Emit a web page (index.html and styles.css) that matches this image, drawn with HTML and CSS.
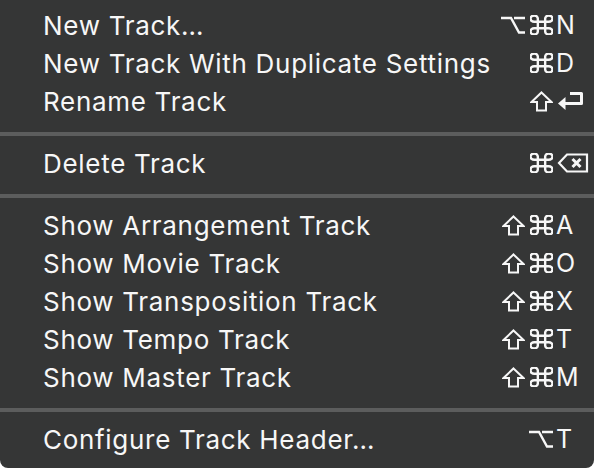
FILE: index.html
```html
<!DOCTYPE html>
<html>
<head>
<meta charset="utf-8">
<link rel="stylesheet" href="styles.css">
</head>
<body>
<div class="menu">
  <div class="item"><span class="label">New Track…</span><span class="mods">
    <svg class="ic opt" viewBox="0 0 24 18"><path d="M0 2H10L18 16.5H24M13 2H24"/></svg>
    <svg class="ic cmd" viewBox="2.6 2.6 18.8 18.8" preserveAspectRatio="none"><path vector-effect="non-scaling-stroke" d="M15 6v12a3 3 0 1 0 3-3H6a3 3 0 1 0 3 3V6a3 3 0 1 0-3 3h12a3 3 0 1 0-3-3"/></svg>
  </span><span class="key">N</span></div>
  <div class="item"><span class="label">New Track With Duplicate Settings</span><span class="mods">
    <svg class="ic cmd" viewBox="2.6 2.6 18.8 18.8" preserveAspectRatio="none"><path vector-effect="non-scaling-stroke" d="M15 6v12a3 3 0 1 0 3-3H6a3 3 0 1 0 3 3V6a3 3 0 1 0-3 3h12a3 3 0 1 0-3-3"/></svg>
  </span><span class="key">D</span></div>
  <div class="item"><span class="label">Rename Track</span><span class="mods">
    <svg class="ic shift" viewBox="0 0 23 21"><path d="M11.5 1.5L21.5 11H16V19.5H7V11H1.5Z"/></svg>
  </span><span class="key"><svg class="ret" viewBox="0 0 28 20"><path class="fill" d="M2 12.5L9.5 6V19Z"/><path d="M8 12.5H25.5V2.5H14"/></svg></span></div>
  <div class="sep"></div>
  <div class="item"><span class="label">Delete Track</span><span class="mods">
    <svg class="ic cmd" viewBox="2.6 2.6 18.8 18.8" preserveAspectRatio="none"><path vector-effect="non-scaling-stroke" d="M15 6v12a3 3 0 1 0 3-3H6a3 3 0 1 0 3 3V6a3 3 0 1 0-3 3h12a3 3 0 1 0-3-3"/></svg>
  </span><span class="key"><svg class="del" viewBox="0 0 33 22"><path d="M3 11L11 2.5H31V19.5H11Z"/><path class="x" d="M16.5 7L24.5 15M24.5 7L16.5 15"/></svg></span></div>
  <div class="sep"></div>
  <div class="item"><span class="label">Show Arrangement Track</span><span class="mods">
    <svg class="ic shift" viewBox="0 0 23 21"><path d="M11.5 1.5L21.5 11H16V19.5H7V11H1.5Z"/></svg>
    <svg class="ic cmd" viewBox="2.6 2.6 18.8 18.8" preserveAspectRatio="none"><path vector-effect="non-scaling-stroke" d="M15 6v12a3 3 0 1 0 3-3H6a3 3 0 1 0 3 3V6a3 3 0 1 0-3 3h12a3 3 0 1 0-3-3"/></svg>
  </span><span class="key">A</span></div>
  <div class="item"><span class="label">Show Movie Track</span><span class="mods">
    <svg class="ic shift" viewBox="0 0 23 21"><path d="M11.5 1.5L21.5 11H16V19.5H7V11H1.5Z"/></svg>
    <svg class="ic cmd" viewBox="2.6 2.6 18.8 18.8" preserveAspectRatio="none"><path vector-effect="non-scaling-stroke" d="M15 6v12a3 3 0 1 0 3-3H6a3 3 0 1 0 3 3V6a3 3 0 1 0-3 3h12a3 3 0 1 0-3-3"/></svg>
  </span><span class="key">O</span></div>
  <div class="item"><span class="label">Show Transposition Track</span><span class="mods">
    <svg class="ic shift" viewBox="0 0 23 21"><path d="M11.5 1.5L21.5 11H16V19.5H7V11H1.5Z"/></svg>
    <svg class="ic cmd" viewBox="2.6 2.6 18.8 18.8" preserveAspectRatio="none"><path vector-effect="non-scaling-stroke" d="M15 6v12a3 3 0 1 0 3-3H6a3 3 0 1 0 3 3V6a3 3 0 1 0-3 3h12a3 3 0 1 0-3-3"/></svg>
  </span><span class="key">X</span></div>
  <div class="item"><span class="label">Show Tempo Track</span><span class="mods">
    <svg class="ic shift" viewBox="0 0 23 21"><path d="M11.5 1.5L21.5 11H16V19.5H7V11H1.5Z"/></svg>
    <svg class="ic cmd" viewBox="2.6 2.6 18.8 18.8" preserveAspectRatio="none"><path vector-effect="non-scaling-stroke" d="M15 6v12a3 3 0 1 0 3-3H6a3 3 0 1 0 3 3V6a3 3 0 1 0-3 3h12a3 3 0 1 0-3-3"/></svg>
  </span><span class="key">T</span></div>
  <div class="item"><span class="label">Show Master Track</span><span class="mods">
    <svg class="ic shift" viewBox="0 0 23 21"><path d="M11.5 1.5L21.5 11H16V19.5H7V11H1.5Z"/></svg>
    <svg class="ic cmd" viewBox="2.6 2.6 18.8 18.8" preserveAspectRatio="none"><path vector-effect="non-scaling-stroke" d="M15 6v12a3 3 0 1 0 3-3H6a3 3 0 1 0 3 3V6a3 3 0 1 0-3 3h12a3 3 0 1 0-3-3"/></svg>
  </span><span class="key">M</span></div>
  <div class="sep"></div>
  <div class="item"><span class="label">Configure Track Header…</span><span class="mods">
    <svg class="ic opt" viewBox="0 0 24 18"><path d="M0 2H10L18 16.5H24M13 2H24"/></svg>
  </span><span class="key">T</span></div>
</div>
</body>
</html>
```

FILE: styles.css
```css
html, body {
  margin: 0;
  padding: 0;
  background: #ffffff;
}

.menu {
  width: 594px;
  height: 468px;
  box-sizing: border-box;
  padding-top: 6px;
  background: #353636;
  border-radius: 0 0 8px 8px;
  font-family: "Inter", "Liberation Sans", sans-serif;
  font-size: 26px;
  font-weight: 400;
  color: #f7f7f7;
}

.item {
  display: grid;
  grid-template-columns: 1fr auto 38px;
  align-items: center;
  height: 38px;
  padding-left: 43px;
}

.label {
  white-space: nowrap;
  letter-spacing: 0.7px;
}

.mods {
  display: flex;
  justify-content: flex-end;
  align-items: center;
  gap: 5px;
  margin-right: 3px;
}

.key {
  display: flex;
  align-items: center;
  line-height: 1;
  font-size: 25px;
}

.ic {
  display: block;
  fill: none;
  stroke: #f7f7f7;
}

.cmd {
  width: 23px;
  height: 20px;
}

.cmd path {
  stroke-width: 2.4;
}

.shift {
  width: 23px;
  height: 21px;
}

.shift path {
  stroke-width: 2;
  stroke-linejoin: miter;
}

.opt {
  width: 24px;
  height: 18px;
}

.opt path {
  stroke-width: 2.4;
}

.ret {
  display: block;
  width: 28px;
  height: 20px;
  fill: none;
  stroke: #f7f7f7;
  stroke-width: 3;
  stroke-linejoin: round;
}

.ret .fill {
  fill: #f7f7f7;
  stroke: none;
}

.del {
  display: block;
  width: 33px;
  height: 22px;
  fill: none;
  stroke: #f7f7f7;
  stroke-width: 2.2;
  stroke-linejoin: miter;
}

.del .x {
  stroke-width: 3;
}

.sep {
  height: 4px;
  margin: 12px 0 8px;
  background: #5c5d5d;
}
```
